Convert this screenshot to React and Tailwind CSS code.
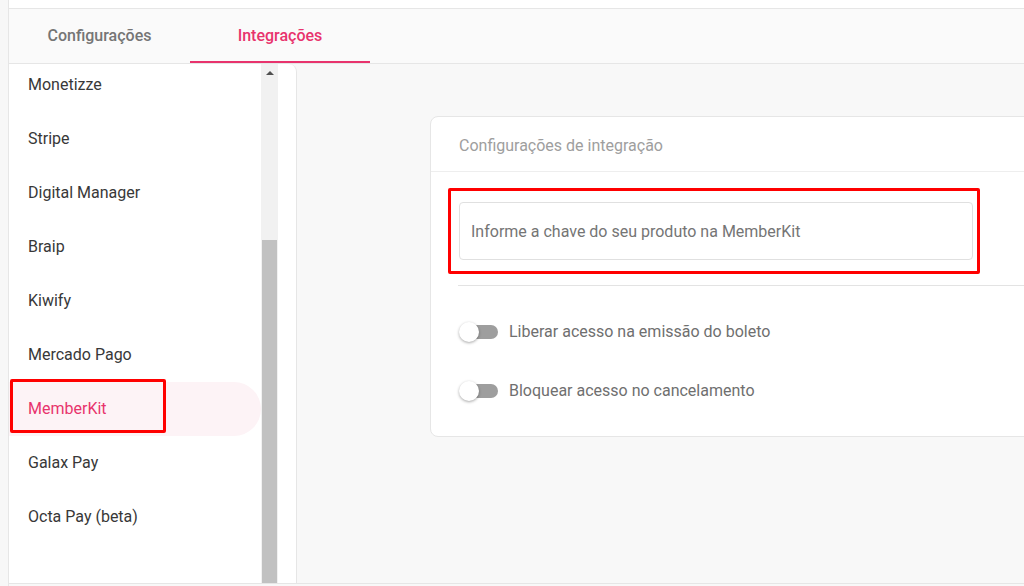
import React from "react";

const items = [
  "Monetizze",
  "Stripe",
  "Digital Manager",
  "Braip",
  "Kiwify",
  "Mercado Pago",
  "MemberKit",
  "Galax Pay",
  "Octa Pay (beta)",
];

function Switch() {
  return (
    <div className="relative w-[37px] h-[14px] rounded-full bg-[#9e9e9e] shrink-0">
      <div className="absolute -left-[2px] -top-[3px] w-[20px] h-[20px] rounded-full bg-white shadow-[0_1px_3px_rgba(0,0,0,0.35)]" />
    </div>
  );
}

export default function App() {
  return (
    <div
      className="w-[1024px] h-[586px] overflow-hidden flex bg-[#f8f8f8]"
      style={{ fontFamily: "Roboto, 'Noto Sans', sans-serif" }}
    >
      <div className="w-[8px] shrink-0 bg-[#f7f7f7] border-r border-[#e6e6e6] box-content" />
      <div className="flex-1 flex flex-col min-w-0">
        <div className="h-[8px] bg-white border-b border-[#e6e6e6] box-content" />
        <div className="h-[54px] bg-[#fafafa] border-b border-[#e6e6e6] box-content flex">
          <div className="w-[181px] flex items-center justify-center text-[16px] font-medium text-[#757575]">
            Configurações
          </div>
          <div className="w-[180px] flex items-center justify-center text-[16px] font-medium text-[#e8336d] border-b-2 border-[#e8336d] pt-[2px]">
            Integrações
          </div>
        </div>
        <div className="flex-1 flex min-h-0 border-b border-[#e6e6e6]">
          <div className="w-[288px] shrink-0 bg-white rounded-tr-[8px] border-r border-[#e6e6e6] flex overflow-hidden">
            <div className="w-[252px] shrink-0 overflow-hidden">
              <div className="-mt-[6px] flex flex-col">
                {items.map((it) => {
                  const active = it === "MemberKit";
                  return (
                    <div
                      key={it}
                      className={
                        active
                          ? "relative h-[54px] flex items-center pl-[19px] text-[16px] text-[#e8336d] bg-[#fdf3f6] rounded-r-full"
                          : "h-[54px] flex items-center pl-[19px] text-[16px] text-[#383838]"
                      }
                    >
                      {it}
                      {active && (
                        <div className="absolute left-[1px] -top-[3px] w-[156px] h-[54px] border-[3px] border-[#ff0000] rounded-[2px]" />
                      )}
                    </div>
                  );
                })}
              </div>
            </div>
            <div className="w-[17px] shrink-0 bg-[#f1f1f1] flex flex-col items-center">
              <div className="h-[17px] flex items-center justify-center">
                <div className="w-0 h-0 border-l-[4px] border-r-[4px] border-b-[4px] border-l-transparent border-r-transparent border-b-[#505050]" />
              </div>
              <div className="h-[159px]" />
              <div className="flex-1 w-[15px] bg-[#c1c1c1]" />
            </div>
          </div>
          <div className="flex-1 min-w-0 pl-[133px] pt-[52px] overflow-hidden">
            <div className="w-[700px] bg-white border border-[#e6e6e6] rounded-l-[8px] pb-[16px]">
              <div className="h-[55px] flex items-center pl-[28px] pt-[3px] text-[16px] text-[#9e9e9e] border-b border-[#eeeeee]">
                Configurações de integração
              </div>
              <div className="ml-[17px] mt-[16px] w-[532px] h-[86px] border-[3px] border-[#ff0000] rounded-[2px] pl-[8px] pt-[11px]">
                <div className="w-[514px] h-[58px] border border-[#e0e0e0] rounded-[4px] flex items-center pl-[11px] pt-[2px] text-[16px] text-[#757575]">
                  Informe a chave do seu produto na MemberKit
                </div>
              </div>
              <div className="ml-[27px] mt-[11px] h-px bg-[#e3e3e3]" />
              <div className="pl-[30px] flex flex-col">
                <div className="h-[59px] mt-[16px] flex items-center gap-[11px]">
                  <Switch />
                  <span className="text-[16px] text-[#6f6f6f]">Liberar acesso na emissão do boleto</span>
                </div>
                <div className="h-[59px] flex items-center gap-[11px]">
                  <Switch />
                  <span className="text-[16px] text-[#6f6f6f]">Bloquear acesso no cancelamento</span>
                </div>
              </div>
            </div>
          </div>
        </div>
        <div className="h-[2px]" />
      </div>
    </div>
  );
}
